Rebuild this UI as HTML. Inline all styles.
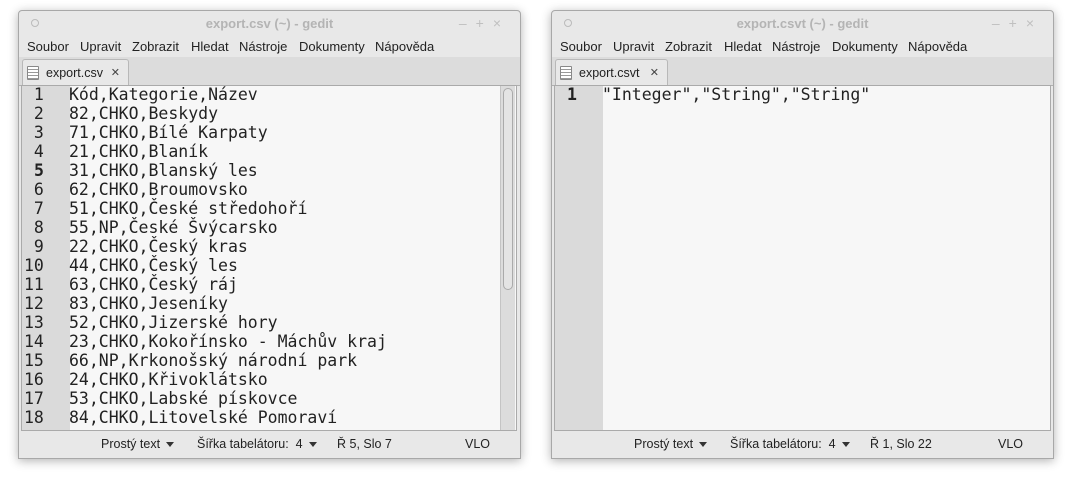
<!DOCTYPE html>
<html><head><meta charset="utf-8"><style>
body{margin:0;width:1072px;height:477px;background:#fff;position:relative;overflow:hidden;font-family:"Liberation Sans",sans-serif;}
.win{position:absolute;top:10px;width:503px;height:449px;background:#e8e8e8;border:1px solid #a8a8a8;border-radius:4px 4px 0 0;box-sizing:border-box;box-shadow:0 2px 10px rgba(0,0,0,0.3);}
.title{position:absolute;top:0;left:0;right:0;height:25px;text-align:center;line-height:25px;font-size:13px;font-weight:bold;color:#b4b4b4;}
.circ{position:absolute;left:12px;top:8px;width:6px;height:6px;border:1px solid #bbb;border-radius:50%;}
.ctl{position:absolute;right:10px;top:0;font-size:14px;color:#c0c0c0;letter-spacing:9px;line-height:25px}
.menu{position:absolute;top:25px;left:0;right:0;height:21px;line-height:21px;font-size:13px;color:#222;}
.menu span{position:absolute}
.tabbar{position:absolute;top:46px;left:0;right:0;height:28px;background:#dcdcdc;border-bottom:1px solid #b0b0b0;}
.tab{position:absolute;left:3px;top:2px;height:27px;background:#e8e8e8;border:1px solid #b8b8b8;border-bottom:none;border-radius:3px 3px 0 0;font-size:12.5px;line-height:26px;color:#222;padding-left:23px;box-sizing:border-box}
.doc{position:absolute;left:4px;top:6px;width:12px;height:14px;border:1px solid #888;background:repeating-linear-gradient(#fff 0 2px,#999 2px 3px);border-radius:1px;box-sizing:border-box}
.x{position:absolute;right:8px;top:0;font-size:11px;color:#444}
.ed{position:absolute;top:74px;left:2px;right:3px;height:344px;background:#f7f7f7;border:1px solid #aaa;overflow:hidden;}
.gut{position:absolute;left:0;top:0;bottom:0;width:48px;background:#dadada;}
.code{position:absolute;top:-1px;font-family:"DejaVu Sans Mono","Liberation Mono",monospace;font-size:16.5px;line-height:19px;color:#222;white-space:pre;}
.nums{left:2px;}
.txt{left:47px;}
.sb{position:absolute;right:1px;top:0;bottom:0;width:14px;background:#dcdcdc;border-left:1px solid #c4c4c4}
.thumb{position:absolute;left:2px;top:2px;width:8px;height:200px;border:1px solid #aaa;border-radius:5px;background:#e4e4e4}
.status{position:absolute;top:419px;left:0;right:0;height:29px;font-size:12.5px;color:#222;line-height:29px}
.status span{position:absolute}
.arr{display:inline-block;border-left:4px solid transparent;border-right:4px solid transparent;border-top:5px solid #333;margin-left:6px;vertical-align:middle}
</style></head><body>

<div class="win" style="left:18px">
 <div class="circ"></div>
 <div class="title">export.csv (~) - gedit</div>
 <div class="ctl">–+×</div>
 <div class="menu"><span style="left:8px">Soubor</span><span style="left:61px">Upravit</span><span style="left:113px">Zobrazit</span><span style="left:172px">Hledat</span><span style="left:220px">Nástroje</span><span style="left:280px">Dokumenty</span><span style="left:356px">Nápověda</span></div>
 <div class="tabbar"><div class="tab" style="width:107px"><div class="doc"></div>export.csv<span class="x">✕</span></div></div>
 <div class="ed">
  <div class="gut"></div>
  <div class="code nums"> 1
 2
 3
 4
 <b>5</b>
 6
 7
 8
 9
10
11
12
13
14
15
16
17
18</div>
  <div class="code txt">Kód,Kategorie,Název
82,CHKO,Beskydy
71,CHKO,Bílé Karpaty
21,CHKO,Blaník
31,CHKO,Blanský les
62,CHKO,Broumovsko
51,CHKO,České středohoří
55,NP,České Švýcarsko
22,CHKO,Český kras
44,CHKO,Český les
63,CHKO,Český ráj
83,CHKO,Jeseníky
52,CHKO,Jizerské hory
23,CHKO,Kokořínsko - Máchův kraj
66,NP,Krkonošský národní park
24,CHKO,Křivoklátsko
53,CHKO,Labské pískovce
84,CHKO,Litovelské Pomoraví</div>
  <div class="sb"><div class="thumb"></div></div>
 </div>
 <div class="status"><span style="left:82px">Prostý text<i class="arr"></i></span><span style="left:178px">Šířka tabelátoru:&nbsp; 4<i class="arr"></i></span><span style="left:318px">Ř 5, Slo 7</span><span style="left:446px">VLO</span></div>
</div>

<div class="win" style="left:551px">
 <div class="circ"></div>
 <div class="title">export.csvt (~) - gedit</div>
 <div class="ctl">–+×</div>
 <div class="menu"><span style="left:8px">Soubor</span><span style="left:61px">Upravit</span><span style="left:113px">Zobrazit</span><span style="left:172px">Hledat</span><span style="left:220px">Nástroje</span><span style="left:280px">Dokumenty</span><span style="left:356px">Nápověda</span></div>
 <div class="tabbar"><div class="tab" style="width:113px"><div class="doc"></div>export.csvt<span class="x">✕</span></div></div>
 <div class="ed" style="right:2px">
  <div class="gut"></div>
  <div class="code nums"> <b>1</b></div>
  <div class="code txt">"Integer","String","String"</div>
 </div>
 <div class="status"><span style="left:82px">Prostý text<i class="arr"></i></span><span style="left:178px">Šířka tabelátoru:&nbsp; 4<i class="arr"></i></span><span style="left:318px">Ř 1, Slo 22</span><span style="left:446px">VLO</span></div>
</div>

</body></html>
